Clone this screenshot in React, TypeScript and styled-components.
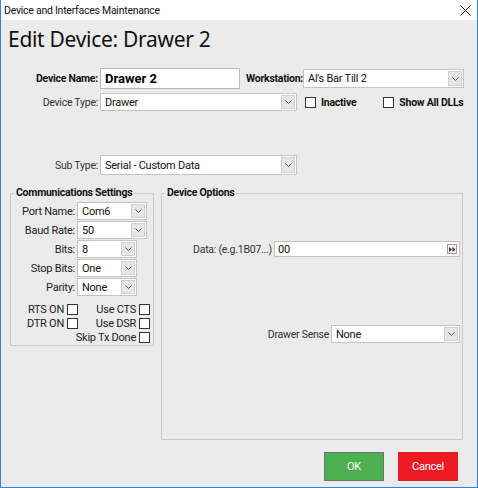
import React from "react";
import styled, { createGlobalStyle } from "styled-components";

const GlobalStyle = createGlobalStyle`
  html, body {
    margin: 0;
    padding: 0;
    background: #ffffff;
  }
  * {
    box-sizing: border-box;
  }
`;

export default function App() {
  return (
    <>
      <GlobalStyle />
      <Window>
        <TitleBar>
          <TitleText>Device and Interfaces Maintenance</TitleText>
          <CloseButton>
            <svg width="11" height="11" viewBox="0 0 11 11">
              <path d="M0.5 0.5 L10.5 10.5 M10.5 0.5 L0.5 10.5" stroke="#111" strokeWidth="1" />
            </svg>
          </CloseButton>
        </TitleBar>
        <Body>
          <Heading>Edit Device: Drawer 2</Heading>

          <FormRow $top={14}>
            <Label $bold>Device Name:</Label>
            <TextInput $bold $width={140} $height={21} defaultValue="Drawer 2" />
            <Label $bold $width={57}>Workstation:</Label>
            <Select value="Al's Bar Till 2" width={161} height={19} />
          </FormRow>

          <FormRow $top={4}>
            <Label>Device Type:</Label>
            <Select value="Drawer" width={197} height={18} />
            <CheckRow $left={8}>
              <CheckBox />
              <CheckLabel $bold>Inactive</CheckLabel>
            </CheckRow>
            <CheckRow $left={27}>
              <CheckBox />
              <CheckLabel $bold>Show All DLLs</CheckLabel>
            </CheckRow>
          </FormRow>

          <FormRow $top={44}>
            <Label>Sub Type:</Label>
            <Select value="Serial - Custom Data" width={197} height={20} />
          </FormRow>

          <Groups>
            <GroupBox $width={144} $height={160}>
              <Legend>Communications Settings</Legend>
              <CommGrid>
                <CommLabel>Port Name:</CommLabel>
                <Select value="Com6" width={70} height={18} />
                <CommLabel>Baud Rate:</CommLabel>
                <Select value="50" width={70} height={18} />
                <CommLabel>Bits:</CommLabel>
                <Select value="8" width={60} height={18} />
                <CommLabel>Stop Bits:</CommLabel>
                <Select value="One" width={60} height={18} />
                <CommLabel>Parity:</CommLabel>
                <Select value="None" width={60} height={18} />
              </CommGrid>
              <FlagGrid>
                <FlagLabel>RTS ON</FlagLabel>
                <CheckBox />
                <FlagLabel>Use CTS</FlagLabel>
                <CheckBox />
                <FlagLabel>DTR ON</FlagLabel>
                <CheckBox />
                <FlagLabel>Use DSR</FlagLabel>
                <CheckBox />
                <FlagLabel $wide>Skip Tx Done</FlagLabel>
                <CheckBox />
              </FlagGrid>
            </GroupBox>

            <GroupBox $width={302} $height={254}>
              <Legend>Device Options</Legend>
              <OptionRow $top={41}>
                <OptionLabel>Data: (e.g.1B07...)</OptionLabel>
                <DataBox>
                  <DataValue>00</DataValue>
                  <MiniButton>
                    <svg width="7" height="5" viewBox="0 0 7 5">
                      <path d="M0 0 L3 2.5 L0 5 Z M3.5 0 L6.5 2.5 L3.5 5 Z" fill="#5a1a5a" />
                    </svg>
                  </MiniButton>
                </DataBox>
              </OptionRow>
              <OptionRow $top={68}>
                <OptionLabel>Drawer Sense</OptionLabel>
                <Select value="None" width={129} height={18} />
              </OptionRow>
            </GroupBox>
          </Groups>

          <ButtonBar>
            <ActionButton $color="#4caf50" $border="#707070">OK</ActionButton>
            <ActionButton $color="#ed1c24" $border="#ed1c24">Cancel</ActionButton>
          </ButtonBar>
        </Body>
      </Window>
    </>
  );
}

const Select = ({ value, width, height }: { value: string; width: number; height: number }) => {
  return (
    <SelectBox style={{ width, height }}>
      <SelectValue>{value}</SelectValue>
      <DropButton>
        <svg width="7" height="4" viewBox="0 0 7 4">
          <path d="M0.5 0.5 L3.5 3.5 L6.5 0.5" stroke="#555" strokeWidth="1" fill="none" />
        </svg>
      </DropButton>
    </SelectBox>
  );
};

const Window = styled.div`
  width: 478px;
  height: 488px;
  display: flex;
  flex-direction: column;
  border-left: 1px solid #2b87d3;
  border-right: 1px solid #2b87d3;
  border-bottom: 1px solid #2b87d3;
  font-family: Roboto, "Noto Sans", sans-serif;
  font-size: 10.5px;
  letter-spacing: -0.25px;
  color: #1e1e1e;
`;

const TitleBar = styled.div`
  height: 20px;
  background: #ffffff;
  display: flex;
  align-items: center;
  justify-content: space-between;
  padding-left: 3px;
  padding-right: 6px;
`;

const TitleText = styled.div`
  font-size: 10.5px;
  color: #111;
`;

const CloseButton = styled.div`
  display: flex;
  align-items: center;
  padding-top: 1px;
`;

const Body = styled.div`
  flex: 1;
  background: #ebebeb;
  display: flex;
  flex-direction: column;
`;

const Heading = styled.div`
  margin-top: 4px;
  padding-left: 7px;
  height: 30px;
  line-height: 30px;
  font-family: "Noto Sans", sans-serif;
  font-size: 21px;
  color: #111;
  letter-spacing: -0.3px;
`;

const FormRow = styled.div<{ $top: number }>`
  display: flex;
  align-items: center;
  margin-top: ${(p) => p.$top}px;
`;

const Label = styled.div<{ $bold?: boolean; $width?: number }>`
  width: ${(p) => p.$width ?? 99}px;
  text-align: right;
  padding-right: 2px;
  margin-left: ${(p) => (p.$width ? 6 : 0)}px;
  font-weight: ${(p) => (p.$bold ? 700 : 400)};
  white-space: nowrap;
  color: ${(p) => (p.$bold ? "#111" : "#333")};
`;

const TextInput = styled.input<{ $bold?: boolean; $width: number; $height: number }>`
  width: ${(p) => p.$width}px;
  height: ${(p) => p.$height}px;
  border: 1px solid #b9b9b9;
  background: #fff;
  padding: 0 4px;
  font-family: Roboto, sans-serif;
  font-size: 13px;
  font-weight: ${(p) => (p.$bold ? 700 : 400)};
  color: #000;
  outline: none;
`;

const SelectBox = styled.div`
  display: flex;
  align-items: stretch;
  border: 1px solid #c3c3c3;
  background: #fff;
`;

const SelectValue = styled.div`
  flex: 1;
  display: flex;
  align-items: center;
  padding-left: 4px;
  font-size: 11px;
  color: #111;
  white-space: nowrap;
  overflow: hidden;
`;

const DropButton = styled.div`
  width: 14px;
  margin: 1px;
  display: flex;
  align-items: center;
  justify-content: center;
  background: #e6e6e6;
  border: 1px solid #cfcfcf;
`;

const CheckRow = styled.div<{ $left: number }>`
  display: flex;
  align-items: center;
  margin-left: ${(p) => p.$left}px;
  gap: 5px;
`;

const CheckBox = styled.div`
  width: 11px;
  height: 11px;
  border: 1px solid #333;
  background: #fff;
`;

const CheckLabel = styled.div<{ $bold?: boolean }>`
  font-weight: ${(p) => (p.$bold ? 700 : 400)};
  color: #111;
  white-space: nowrap;
`;

const Groups = styled.div`
  display: flex;
  align-items: flex-start;
  gap: 7px;
  margin-top: 11px;
  padding-left: 9px;
`;

const GroupBox = styled.fieldset<{ $width: number; $height: number }>`
  width: ${(p) => p.$width}px;
  height: ${(p) => p.$height}px;
  margin: 0;
  padding: 0;
  border: 1px solid #cacaca;
  display: flex;
  flex-direction: column;
`;

const Legend = styled.legend`
  margin-left: 3px;
  padding: 0 2px;
  height: 14px;
  line-height: 14px;
  font-weight: 700;
  color: #111;
  white-space: nowrap;
`;

const CommGrid = styled.div`
  display: grid;
  grid-template-columns: 64px auto;
  column-gap: 2px;
  row-gap: 1px;
  margin-top: 2px;
  justify-items: start;
  align-items: center;
`;

const CommLabel = styled.div`
  justify-self: end;
  font-size: 11px;
  color: #222;
`;

const FlagGrid = styled.div`
  display: grid;
  grid-template-columns: 53px 11px 55px 11px;
  grid-auto-rows: 14px;
  column-gap: 3px;
  margin-top: 6px;
  align-items: center;
`;

const FlagLabel = styled.div<{ $wide?: boolean }>`
  grid-column: ${(p) => (p.$wide ? "1 / 4" : "auto")};
  text-align: right;
  font-size: 11px;
  color: #222;
  white-space: nowrap;
`;

const OptionRow = styled.div<{ $top: number }>`
  display: flex;
  justify-content: flex-end;
  align-items: center;
  margin-top: ${(p) => p.$top}px;
  padding-right: 2px;
`;

const OptionLabel = styled.div`
  padding-right: 2px;
  color: #333;
  white-space: nowrap;
`;

const DataBox = styled.div`
  width: 186px;
  height: 16px;
  display: flex;
  align-items: center;
  border: 1px solid #c3c3c3;
  background: #fff;
  padding-right: 2px;
`;

const DataValue = styled.div`
  flex: 1;
  padding-left: 3px;
  font-size: 11px;
  color: #111;
`;

const MiniButton = styled.div`
  width: 10px;
  height: 10px;
  display: flex;
  align-items: center;
  justify-content: center;
  border: 1px solid #9a9a9a;
  background: #f4f4f4;
`;

const ButtonBar = styled.div`
  display: flex;
  justify-content: flex-end;
  gap: 14px;
  margin-top: 12px;
  padding-right: 19px;
`;

const ActionButton = styled.div<{ $color: string; $border: string }>`
  width: 60px;
  height: 29px;
  display: flex;
  align-items: center;
  justify-content: center;
  background: ${(p) => p.$color};
  border: 1px solid ${(p) => p.$border};
  color: #fff;
  font-size: 11px;
`;
